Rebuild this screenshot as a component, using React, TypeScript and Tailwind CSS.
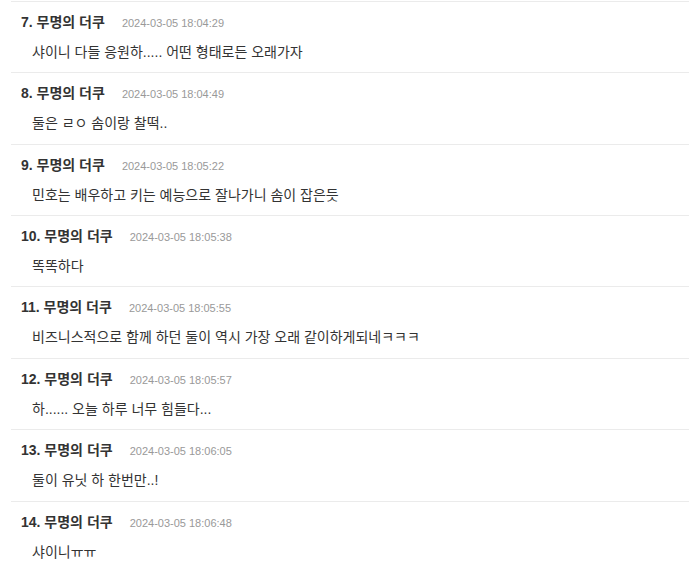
import React from "react";

const comments = [
  { n: 7, date: "2024-03-05 18:04:29", text: "샤이니 다들 응원하..... 어떤 형태로든 오래가자" },
  { n: 8, date: "2024-03-05 18:04:49", text: "둘은 ㄹㅇ 솜이랑 찰떡.." },
  { n: 9, date: "2024-03-05 18:05:22", text: "민호는 배우하고 키는 예능으로 잘나가니 솜이 잡은듯" },
  { n: 10, date: "2024-03-05 18:05:38", text: "똑똑하다" },
  { n: 11, date: "2024-03-05 18:05:55", text: "비즈니스적으로 함께 하던 둘이 역시 가장 오래 같이하게되네ㅋㅋㅋ" },
  { n: 12, date: "2024-03-05 18:05:57", text: "하...... 오늘 하루 너무 힘들다..." },
  { n: 13, date: "2024-03-05 18:06:05", text: "둘이 유닛 하 한번만..!" },
  { n: 14, date: "2024-03-05 18:06:48", text: "샤이니ㅠㅠ" },
];

export default function App() {
  return (
    <div
      className="min-h-[571px] bg-white pt-[1px] pl-[11px] text-[#333]"
      style={{ fontFamily: "'Liberation Sans', 'Noto Sans CJK KR', sans-serif" }}
    >
      {comments.map((c) => (
        <div key={c.n} className="h-[71.36px] border-t border-[#ebebeb] pt-[10px] pl-[10px] overflow-hidden">
          <div className="flex h-[20px] items-baseline leading-[20px]">
            <span className="text-[14px] font-bold text-[#333]">
              {c.n}. 무명의 더쿠
            </span>
            <span className="ml-[17px] text-[11px] text-[#999]">{c.date}</span>
          </div>
          <div className="mt-[10px] h-[20px] pl-[11px] text-[14px] leading-[20px] text-[#333]">{c.text}</div>
        </div>
      ))}
    </div>
  );
}
